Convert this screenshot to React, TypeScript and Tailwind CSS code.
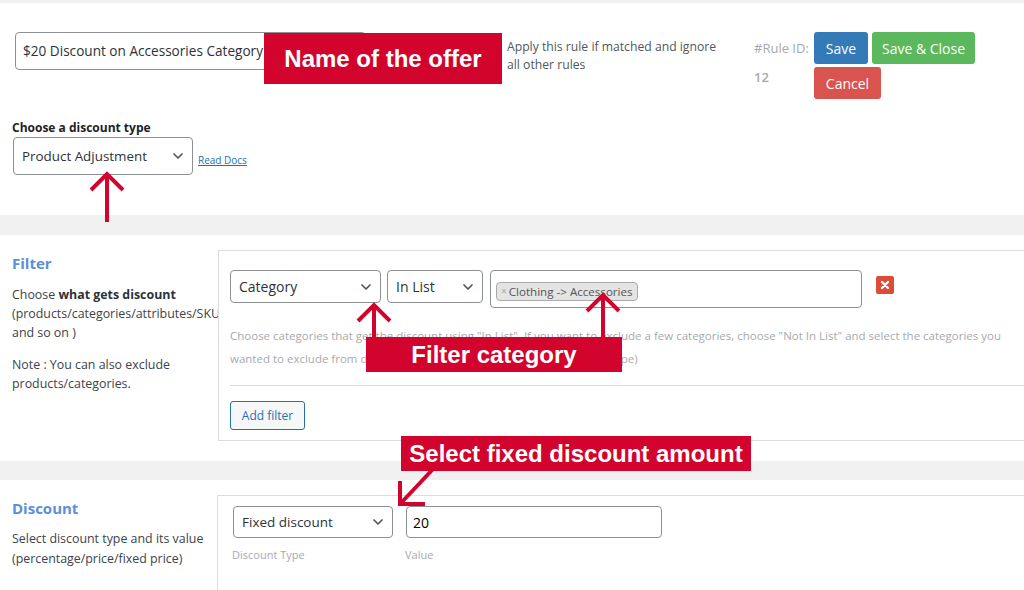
import React from "react";

function Chevron() {
  return (
    <svg width="12" height="8" viewBox="0 0 12 8" fill="none" stroke="#50575e" strokeWidth="1.7" strokeLinecap="round" strokeLinejoin="round">
      <path d="M2 2l4 4 4-4" />
    </svg>
  );
}

function Select({ value, className }: { value: string; className: string }) {
  return (
    <div className={`flex items-center justify-between border border-[#8c8f94] rounded-[4px] bg-white pl-[8px] pr-[8px] text-[#2c3338] ${className}`}>
      <span>{value}</span>
      <Chevron />
    </div>
  );
}

function Callout({ text, className }: { text: string; className: string }) {
  return (
    <div className={`absolute flex items-center justify-center bg-[#d2042d] text-white font-bold text-[24px] font-['Liberation_Sans',Arial,sans-serif] ${className}`}>
      {text}
    </div>
  );
}

export default function App() {
  return (
    <div className="relative w-[1024px] h-[590px] overflow-hidden bg-white font-['Open_Sans',sans-serif] text-[#3c434a]">
      <div className="h-[3px] bg-[#f0f0f1]" />

      {/* Header */}
      <div className="flex items-start pt-[29px] pl-[15px]">
        <div className="w-[351px] h-[38px] border border-[#8c8f94] rounded-[4px] flex items-center pl-[7px] text-[13.6px] text-[#2c3338]">
          $20 Discount on Accessories Category
        </div>
        <div className="ml-[141px] mt-[6px] w-[230px] text-[12.2px] leading-[18px] text-[#50575e]">
          Apply this rule if matched and ignore
          <br />
          all other rules
        </div>
        <div className="ml-[17px] w-[60px] flex flex-col text-[13px] text-[#a7aaad]">
          <span className="leading-[32px]">#Rule ID:</span>
          <span className="leading-[26px] font-semibold">12</span>
        </div>
        <div className="flex flex-col gap-[3px] text-[14px] text-white">
          <div className="flex gap-[4px]">
            <button className="w-[54px] h-[32px] rounded-[3px] bg-[#337ab7]">Save</button>
            <button className="w-[103px] h-[32px] rounded-[3px] bg-[#5cb85c]">Save &amp; Close</button>
          </div>
          <button className="w-[67px] h-[32px] rounded-[3px] bg-[#d9534f]">Cancel</button>
        </div>
      </div>

      {/* Discount type */}
      <div className="mt-[21px] pl-[12px]">
        <div className="text-[12px] leading-[16px] font-bold text-[#1d2327]">Choose a discount type</div>
        <div className="flex items-center mt-[1px]">
          <Select value="Product Adjustment" className="ml-[1px] w-[180px] h-[38px] text-[13.4px]" />
          <a className="ml-[5px] pt-[8px] text-[10px] text-[#2271b1] underline">Read Docs</a>
        </div>
      </div>

      <div className="mt-[40px] h-[20px] bg-[#f0f0f1]" />

      {/* Filter */}
      <div className="flex pt-[15px] pb-[20px]">
        <div className="w-[218px] shrink-0 overflow-hidden pl-[12px] text-[12.4px]">
          <div className="mt-[3px] text-[15px] leading-[20px] font-bold text-[#5b8fd6]">Filter</div>
          <div className="mt-[12px] leading-[19px] whitespace-nowrap">
            Choose <b className="text-[#2c3338]">what gets discount</b>
            <br />
            (products/categories/attributes/SKUs
            <br />
            and so on )
          </div>
          <div className="mt-[13px] leading-[19px] whitespace-nowrap">
            Note : You can also exclude
            <br />
            products/categories.
          </div>
        </div>
        <div className="flex-1 border-y border-l border-[#dcdcde] pl-[11px] pt-[19px] pb-[10px] bg-white">
          <div className="flex items-start">
            <Select value="Category" className="w-[151px] h-[33px] text-[14px]" />
            <Select value="In List" className="ml-[6px] w-[96px] h-[33px] text-[14px]" />
            <div className="ml-[7px] w-[372px] h-[38px] border border-[#8c8f94] rounded-[4px] pl-[5px] pt-[6px]">
              <span className="inline-flex items-center h-[19px] px-[4px] bg-[#e4e4e4] border border-[#aaaaaa] rounded-[4px] text-[11.6px] text-[#555]">
                <span className="text-[#aaa] mr-[2px] text-[10px]">×</span>Clothing -&gt; Accessories
              </span>
            </div>
            <div className="ml-[14px] mt-[6px] w-[18px] h-[18px] rounded-[2px] bg-[#dd4b39] flex items-center justify-center">
              <svg width="10" height="10" viewBox="0 0 10 10" stroke="#fff" strokeWidth="2.4" strokeLinecap="round">
                <path d="M2 2l6 6M8 2l-6 6" />
              </svg>
            </div>
          </div>
          <div className="mt-[16px] text-[11.5px] leading-[23px] text-[#a7aaad] whitespace-nowrap">
            <div>Choose categories that get the discount using "In List". If you want to exclude a few categories, choose "Not In List" and select the categories you</div>
            <div>wanted to exclude from discount. (You can add multiple filters of same type)</div>
          </div>
          <div className="mt-[15px] border-t border-[#dcdcde]" />
          <button className="mt-[15px] w-[75px] h-[29px] border border-[#2271b1] rounded-[3px] bg-[#f6f7f7] text-[12px] text-[#2271b1]">
            Add filter
          </button>
        </div>
      </div>

      <div className="h-[19px] bg-[#f0f0f1]" />

      {/* Discount */}
      <div className="flex pt-[15px]">
        <div className="w-[217px] shrink-0 overflow-hidden pl-[12px] text-[12.4px]">
          <div className="mt-[3px] text-[15px] leading-[20px] font-bold text-[#5b8fd6]">Discount</div>
          <div className="mt-[11px] leading-[20px] whitespace-nowrap">
            Select discount type and its value
            <br />
            (percentage/price/fixed price)
          </div>
        </div>
        <div className="flex-1 h-[95px] border-t border-l border-[#dcdcde] pl-[15px] pt-[10px]">
          <div className="flex items-start">
            <Select value="Fixed discount" className="w-[160px] h-[32px] text-[13.5px]" />
            <div className="ml-[13px] w-[256px] h-[32px] border border-[#8c8f94] rounded-[4px] flex items-center pl-[6px] text-[14px] text-black">
              20
            </div>
          </div>
          <div className="mt-[10px] flex text-[11px] leading-[14px] text-[#a7aaad]">
            <span className="w-[173px] -ml-[1px]">Discount Type</span>
            <span>Value</span>
          </div>
        </div>
      </div>

      {/* Annotations */}
      <svg className="absolute inset-0 pointer-events-none" width="1024" height="590" viewBox="0 0 1024 590" fill="none" stroke="#d2042d" strokeWidth="4" strokeLinecap="butt" strokeLinejoin="miter">
        <path d="M107 174V222M91 190L107 174L123 190" />
        <path d="M374 305V340M358 321L374 305L390 321" />
        <path d="M603 295V340M587 311L603 295L619 311" />
        <path d="M434 468L401 503M400 481V504H425" />
      </svg>
      <Callout text="Name of the offer" className="left-[264px] top-[33px] w-[238px] h-[51px]" />
      <Callout text="Filter category" className="left-[366px] top-[337px] w-[256px] h-[35px]" />
      <Callout text="Select fixed discount amount" className="left-[401px] top-[436px] w-[350px] h-[35px]" />
    </div>
  );
}
